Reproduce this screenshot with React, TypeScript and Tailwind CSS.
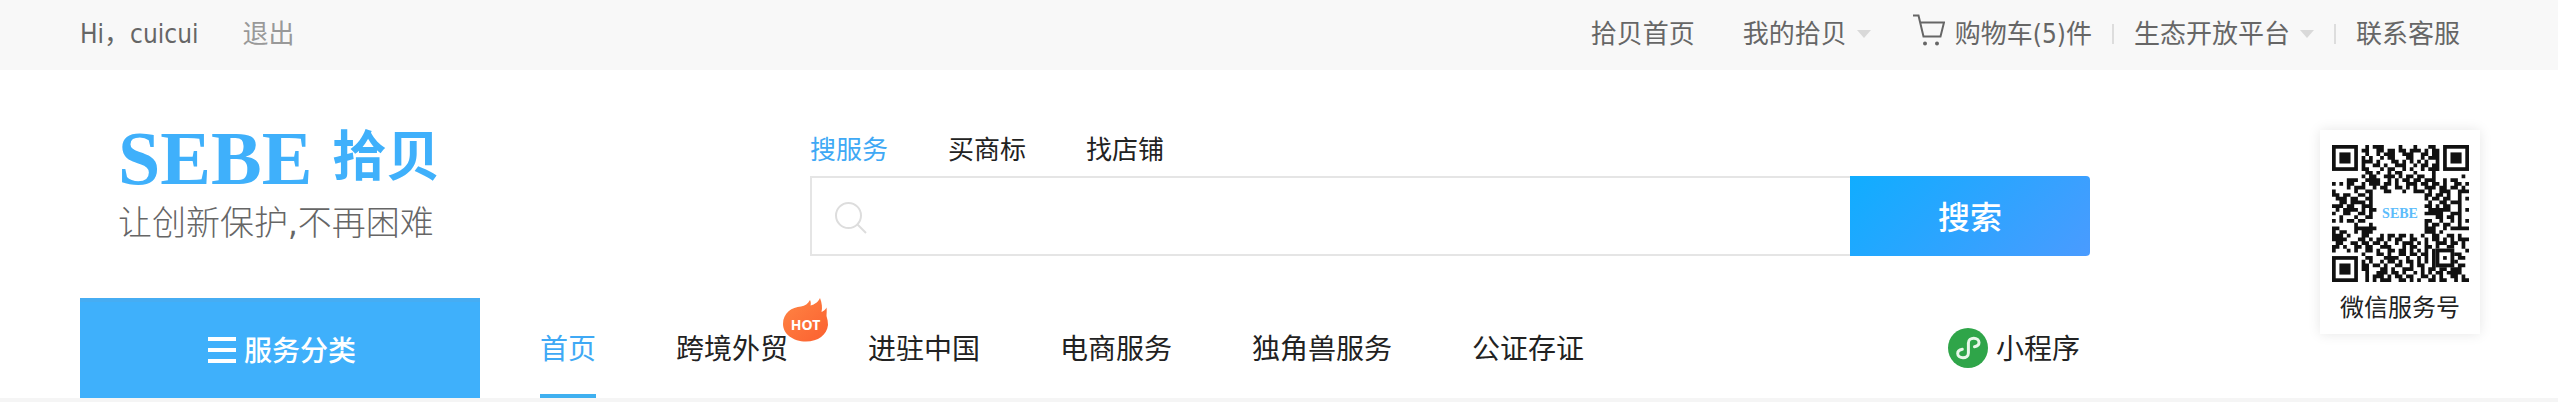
import React from "react";

const FONT = "font-['DejaVu_Sans_Condensed','Noto_Sans_CJK_SC',sans-serif]";

const NAV = ["首页", "跨境外贸", "进驻中国", "电商服务", "独角兽服务", "公证存证"];
const TABS = ["搜服务", "买商标", "找店铺"];

const QR_ROWS = [
  ".........#.###....#...#...##.........",
  "........##..##.##.##.###.#.##........",
  ".........#..#.###..###..##.##........",
  "........#.#..#.##...##..#.###........",
  "........###.#...##.#.#.#.#..#........",
  "........#..##.#..###..#.##.##........",
  "........##...#.##..#.#..#.###........",
  ".........##.#..#.##...#....#.........",
  "........#.##..###.#.##.##..#.......#.",
  "....###..####..#.#.##.##.###..#.##...",
  "#.#.##..#.###.##.#..###.##.##.#..##.#",
  "....#.###..#.##..##.#.#..###.##.##.#.",
  "#.....#..##...##...#..###.#..###..###",
  "##.##..##.#..............##.##.#..#..",
  ".###.##..##..............#.##.##..#.#",
  "..##.####.#...............#..##.###..",
  "###.##..###..............##.#.##..#..",
  ".#.####.#.##..............######..#.#",
  "#..##..##.#..............#####..###..",
  "..#...#..##.................##.##.#..",
  "#.#.##.##................##..#..#.#.#",
  "......#...#..............#.##.##..#..",
  "##....######.............###..#.#####",
  "#.##..#.###..............###.#.......",
  "###.#...##...#.##.##.#..#..##..##.#..",
  "####...##.#.##.#.##..##..#.##.#.#.###",
  ".##..##.##.##.#..#.###.#.#..###.##.#.",
  "##.#..##.##..###...#.##..##.#..##..#.",
  "#...#.#..##.#..##.##.#.#.#.######...#",
  "........#...##.#..##.##.##.##...###..",
  ".........##...####..#..#.#.##...#.##.",
  "........#.#..#.##.#.##.#.#.##...##...",
  "........##.##.#..##..#.##..######.##.",
  "........##...##.#..###..#.##.##.###..",
  ".........#..###.##.#..#.#.#.##.####..",
  ".........#.###.#.##.##..##.#.#..##.#.",
  ".........#.#.###..##.#.#..##.##..#.##",
];

function Finder({ x, y }: { x: number; y: number }) {
  return (
    <g>
      <rect x={x + 0.5} y={y + 0.5} width="6" height="6" fill="none" stroke="#111" />
      <rect x={x + 2} y={y + 2} width="3" height="3" fill="#111" />
    </g>
  );
}

function QrCode() {
  const path = QR_ROWS.map((row, y) =>
    row
      .split("")
      .map((c, x) => (c === "#" ? `M${x} ${y}h1v1h-1z` : ""))
      .join("")
  ).join("");
  return (
    <div className="relative grid place-items-center">
      <svg viewBox="0 0 37 37" className="size-[137px]" role="img" aria-label="微信服务号">
        <path d={path} fill="#111" />
        <Finder x={0} y={0} />
        <Finder x={30} y={0} />
        <Finder x={0} y={30} />
        <rect x="28" y="28" width="5" height="5" fill="#fff" />
        <rect x="28.5" y="28.5" width="4" height="4" fill="none" stroke="#111" />
        <rect x="30" y="30" width="1" height="1" fill="#111" />
      </svg>
      <span className="absolute font-['Liberation_Serif',serif] text-sm font-bold text-[#5cbcfb]">SEBE</span>
    </div>
  );
}

function Caret() {
  return (
    <svg viewBox="0 0 14 8" className="h-2 w-3.5" aria-hidden="true">
      <path d="M0 0h14L7 8z" fill="#d9d9d9" />
    </svg>
  );
}

function CartIcon() {
  return (
    <svg viewBox="0 0 32 32" className="mb-2 size-8" fill="none" stroke="#666" strokeWidth="2" aria-hidden="true">
      <path d="M0 1.5h5.5L10.5 22.5h17L31 8.5H7.5" />
      <circle cx="12" cy="29.5" r="2" fill="#666" stroke="none" />
      <circle cx="24" cy="29.5" r="2" fill="#666" stroke="none" />
    </svg>
  );
}

function HotBadge() {
  return (
    <span className="absolute -top-8 left-[107px] grid h-11 w-[45px] place-items-center">
      <svg viewBox="0 0 45 44" className="col-start-1 row-start-1 h-11 w-[45px]" aria-hidden="true">
        <defs>
          <linearGradient id="hot" x1="0" y1="0" x2="1" y2="1">
            <stop offset="0" stopColor="#ff8544" />
            <stop offset="1" stopColor="#fb6030" />
          </linearGradient>
        </defs>
        <path
          d="M0 26C0 15 9 9 18 8.5C22 8 25 5.5 27 2C28 4 28 6 27.5 7.5C32 6.5 35.5 3.5 37 0C39 5 39.5 10 38.5 14C40.5 13 42.5 11.5 43.5 9.5C44 13 43.5 16 43.5 18C44.5 21 45 24 45 27C44 37 35 43.5 23 43.5C10 43.5 0 36 0 26Z"
          fill="url(#hot)"
        />
      </svg>
      <span className="col-start-1 row-start-1 pt-2.5 font-['Noto_Sans',sans-serif] text-sm leading-none font-bold text-white">
        HOT
      </span>
    </span>
  );
}

function MiniProgramIcon() {
  return (
    <svg viewBox="0 0 40 40" className="size-10" aria-hidden="true">
      <circle cx="20" cy="20" r="20" fill="#2fa549" />
      <path
        d="M26.5 18.7c2.8-.5 4.5-2 4.5-4.200 0-2.600-2.300-4.300-5.200-4.300s-5.400 1.900-5.400 4.800v10c0 2.900-2.500 4.800-5.400 4.800s-5.300-1.700-5.300-4.300c0-2.200 1.800-3.700 4.600-4.200"
        fill="none"
        stroke="#e9f7ea"
        strokeWidth="3"
        strokeLinecap="round"
      />
    </svg>
  );
}

function TopBar() {
  return (
    <div className="flex h-[70px] items-center justify-between bg-[#f8f8f8] pr-[98px] pb-0.5 pl-20 text-[26px] leading-9 whitespace-nowrap text-[#666]">
      <div className="flex items-center gap-11">
        <span>Hi，cuicui</span>
        <a href="#logout" className="text-[#999]">退出</a>
      </div>
      <nav className="flex items-center" aria-label="快捷入口">
        <a href="#home">拾贝首页</a>
        <a href="#mine" className="ml-12 flex items-center gap-2.5">
          我的拾贝
          <Caret />
        </a>
        <a href="#cart" className="ml-[42px] flex items-center gap-2.5">
          <CartIcon />
          购物车(5)件
        </a>
        <span className="mx-5 h-5 w-0.5 bg-[#ddd]" />
        <a href="#platform" className="flex items-center gap-2.5">
          生态开放平台
          <Caret />
        </a>
        <span className="mx-5 h-5 w-0.5 bg-[#ddd]" />
        <a href="#service">联系客服</a>
      </nav>
    </div>
  );
}

function Logo() {
  return (
    <a href="#home" className="block w-[730px] shrink-0 pt-14 pl-[38px] whitespace-nowrap">
      <span className="flex h-16 items-center gap-5 text-[#3fb0fb]">
        <span className="font-['Liberation_Serif',serif] text-[76px] leading-none font-bold">SEBE</span>
        <span className="text-[54px] leading-none font-bold">拾贝</span>
      </span>
      <span className="mt-2 block text-[34px] leading-[50px] font-light text-[#666]">让创新保护,不再困难</span>
    </a>
  );
}

function Search() {
  return (
    <form className="min-w-0 flex-1 pt-[60px]" onSubmit={(e) => e.preventDefault()}>
      <div className="flex h-[46px] gap-[60px] text-[26px] leading-10 text-[#222]">
        {TABS.map((tab, i) => (
          <button key={tab} type="button" className={i === 0 ? "h-10 text-[#3fa9f5]" : "h-10"}>
            {tab}
          </button>
        ))}
      </div>
      <div className="flex h-20">
        <label className="flex min-w-0 flex-1 items-center gap-4 border-2 border-r-0 border-[#e5e5e5] pt-1 pl-[23px]">
          <svg viewBox="0 0 32 32" className="size-8 shrink-0" fill="none" stroke="#ddd" strokeWidth="2" aria-hidden="true">
            <circle cx="13.5" cy="13.5" r="12.5" />
            <path d="M22.5 22.5l8.5 8.5" />
          </svg>
          <input type="search" aria-label="搜索" className="h-full min-w-0 flex-1 text-[26px] outline-none" />
        </label>
        <button
          type="submit"
          className="w-60 shrink-0 rounded-r bg-[linear-gradient(135deg,#10adff,#4a9bff)] pt-1 text-[32px] font-medium text-white"
        >
          搜索
        </button>
      </div>
    </form>
  );
}

function MainNav() {
  return (
    <div className="flex h-[100px] items-stretch text-[28px] leading-10 whitespace-nowrap text-[#222]">
      <button type="button" className="flex w-[400px] shrink-0 items-center justify-center gap-2 border-t-4 border-[#46adf3] bg-[#3fb0fb] pl-1 text-white">
        <svg viewBox="0 0 28 26" className="h-[26px] w-7" aria-hidden="true">
          <path d="M0 2h28M0 13h28M0 24h28" stroke="#fff" strokeWidth="4" />
        </svg>
        <span className="pt-1 font-medium">服务分类</span>
      </button>
      <nav className="ml-[60px] flex gap-20" aria-label="主导航">
        {NAV.map((item, i) => (
          <a
            key={item}
            href="#nav"
            className={
              i === 0
                ? "flex items-center border-y-4 border-t-transparent border-b-[#3fb0f0] pt-1 text-[#3fa9f5]"
                : "flex items-center pt-1"
            }
          >
            <span className="relative">
              {item}
              {i === 1 && <HotBadge />}
            </span>
          </a>
        ))}
      </nav>
      <a href="#mini" className="mr-2.5 ml-auto flex items-center gap-2">
        <MiniProgramIcon />
        <span className="pt-1">小程序</span>
      </a>
    </div>
  );
}

export default function App() {
  return (
    <div className={`bg-white ${FONT}`}>
      <TopBar />
      <header className="flex border-b-4 border-[#f5f5f5] pr-[78px] pl-20">
        <div className="min-w-0 flex-1">
          <div className="flex h-[228px]">
            <Logo />
            <Search />
          </div>
          <MainNav />
        </div>
        <aside className="mt-[60px] ml-[230px] flex h-[204px] w-40 shrink-0 flex-col items-center bg-white pt-[15px] shadow-[0_0_12px_rgba(0,0,0,0.1)]">
          <QrCode />
          <p className="mt-2 text-2xl leading-9 text-[#222]">微信服务号</p>
        </aside>
      </header>
    </div>
  );
}
